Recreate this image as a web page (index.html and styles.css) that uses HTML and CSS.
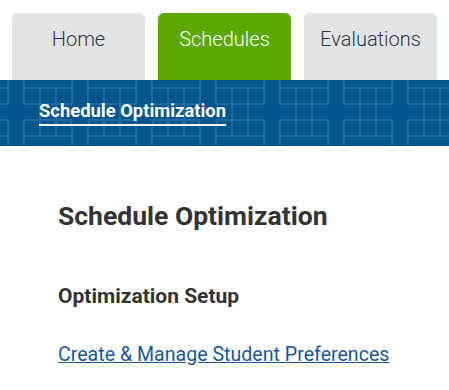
FILE: index.html
```html
<!DOCTYPE html>
<html lang="en">
<head>
  <meta charset="UTF-8">
  <title>Schedule Optimization</title>
  <link rel="stylesheet" href="styles.css">
</head>
<body>

<nav class="tabs">
  <a class="tab" href="#">Home</a>
  <a class="tab active" href="#">Schedules</a>
  <a class="tab" href="#">Evaluations</a>
</nav>

<div class="subnav">
  <svg class="subnav-bg" width="100%" height="100%" aria-hidden="true">
    <defs>
      <!-- grid with open crosses every 64px -->
      <pattern id="lattice" x="0" y="0" width="64" height="66" patternUnits="userSpaceOnUse">
        <path d="M0 8H8 M24 8H64 M0 24H8 M24 24H64 M0 40H8 M24 40H64 M0 56H8 M24 56H64
                 M8 0V24 M8 40V66 M24 0V24 M24 40V66 M40 8V56 M56 8V56"
              fill="none" stroke="rgba(255,255,255,0.12)" stroke-width="2"/>
      </pattern>
    </defs>
    <rect width="100%" height="100%" fill="url(#lattice)"/>
  </svg>
  <a class="subnav-link" href="#">Schedule Optimization</a>
</div>

<main class="content">
  <h1 class="page-title">Schedule Optimization</h1>
  <h2 class="section-title">Optimization Setup</h2>
  <a class="link" href="#">Create &amp; Manage Student Preferences</a>
</main>

</body>
</html>
```

FILE: styles.css
```css
* {
  box-sizing: border-box;
}

body {
  margin: 0;
  background-color: #fff;
  font-family: Roboto, "Liberation Sans", sans-serif;
  color: #333;
}

.tabs {
  display: flex;
  gap: 13px;
  padding: 13px 12px 0;
}

.tab {
  width: 133px;
  height: 67px;
  padding-top: 14px;
  border-radius: 6px 6px 0 0;
  background-color: #e1e5e8;
  color: #333;
  font-size: 20px;
  font-weight: 300;
  line-height: 24px;
  text-align: center;
  text-decoration: none;
}

.tab.active {
  background-color: #5aa800;
  color: #fff;
}

.subnav {
  position: relative;
  height: 66px;
  padding: 21px 0 0 39px;
  background-color: #04558e;
}

.subnav-bg {
  position: absolute;
  top: 0;
  left: 0;
}

.subnav-link {
  position: relative;
  color: #fff;
  font-size: 18.4px;
  font-weight: 700;
  line-height: 20px;
  text-decoration: underline;
  text-decoration-thickness: 2px;
  text-underline-offset: 7px;
}

.content {
  padding: 54px 0 0 58px;
}

.page-title {
  margin: 0 0 52px;
  font-size: 26.5px;
  font-weight: 700;
  line-height: 32px;
}

.section-title {
  margin: 0 0 35px;
  font-size: 21px;
  font-weight: 700;
  line-height: 24px;
}

.link {
  color: #1a5893;
  font-size: 19.6px;
  line-height: 24px;
}
```
